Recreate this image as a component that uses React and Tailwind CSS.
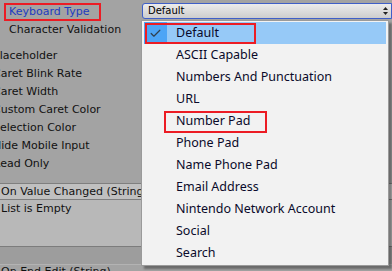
import React from 'react';
import { Check } from 'lucide-react';

const labelFont = { fontFamily: '"DejaVu Sans", Verdana, sans-serif' };
const menuFont = { fontFamily: '"Noto Sans", "Open Sans", sans-serif' };

const props = [
  'Placeholder',
  'Caret Blink Rate',
  'Caret Width',
  'Custom Caret Color',
  'Selection Color',
  'Hide Mobile Input',
  'Read Only',
];

const options = [
  'Default',
  'ASCII Capable',
  'Numbers And Punctuation',
  'URL',
  'Number Pad',
  'Phone Pad',
  'Name Phone Pad',
  'Email Address',
  'Nintendo Network Account',
  'Social',
  'Search',
];

const UpDown = () => (
  <svg width="5" height="8" viewBox="0 0 5 8" className="shrink-0">
    <path d="M2.5 0 L5 3 L0 3 Z" fill="#222" />
    <path d="M2.5 8 L5 5 L0 5 Z" fill="#222" />
  </svg>
);

export default function App() {
  return (
    <div
      className="relative w-[392px] h-[271px] overflow-hidden bg-[#a3a3a3] text-[11px] text-black"
      style={labelFont}
    >
      {/* Inspector rows */}
      <div className="flex flex-col pt-[3px]">
        <div className="flex h-[18px] items-start">
          <div className="w-[142px] shrink-0 pl-[9px] leading-[18px] text-[#1e3cc0]">Keyboard Type</div>
          <div className="flex h-[16px] flex-1 items-center justify-between rounded-l-[3px] border border-[#3f5fc8] bg-linear-to-b from-[#ececec] to-[#cdcdcd] pl-[5px] pr-[3px] text-[10px] leading-none">
            <span>Default</span>
            <UpDown />
          </div>
        </div>
        <div className="h-[18px] pl-[9px] leading-[18px] text-[#111]">Character Validation</div>

        <div className="mt-[8px] flex flex-col">
          {props.map((p) => (
            <div key={p} className="ml-[-7px] h-[18px] whitespace-nowrap leading-[18px] text-[#111]">
              {p}
            </div>
          ))}
        </div>

        {/* Event section */}
        <div className="mt-[10px] h-[17px] border-y border-[#7f7f7f] bg-[#c0c0c0] pl-[1px] leading-[15px] text-[#111] whitespace-nowrap">
          On Value Changed (String)
        </div>
        <div className="h-[47px] border-b border-[#7c7c7c] bg-[#b8b8b8] pl-[1px] leading-[17px] text-[#111]">
          List is Empty
        </div>
        <div className="h-[18px] border-b border-[#b3b3b3] bg-[#9d9d9d]" />
        <div className="pl-[1px] leading-[14px] text-[#111]">On End Edit (String)</div>
      </div>

      {/* Popup menu */}
      <div
        className="absolute left-[141px] top-[20px] flex h-[246px] w-[248px] flex-col border border-[#9a9a9a] bg-[#f2f2f2] px-[2px] py-[1px] text-[12.5px] text-[#0a0a2a] shadow-[3px_3px_2px_rgba(0,0,0,0.35)]"
        style={menuFont}
      >
        {options.map((o, i) => (
          <div key={o} className={`flex h-[22px] shrink-0 items-center ${i === 0 ? 'bg-[#96c9f7]' : ''}`}>
            <div className={`flex h-full w-[23px] items-center justify-center ${i === 0 ? 'bg-[#4da5f6]' : ''}`}>
              {i === 0 && <Check size={13} strokeWidth={2.2} className="text-[#30404f]" />}
            </div>
            <span className="pl-[9px] whitespace-nowrap">{o}</span>
          </div>
        ))}
      </div>

      {/* Red annotation boxes */}
      <div className="absolute left-[4px] top-[3px] h-[18px] w-[97px] border-2 border-[#ec1c24]" />
      <div className="absolute left-[145px] top-[23px] h-[21px] w-[111px] border-2 border-[#ec1c24]" />
      <div className="absolute left-[164px] top-[111px] h-[22px] w-[103px] border-2 border-[#ec1c24]" />
    </div>
  );
}
